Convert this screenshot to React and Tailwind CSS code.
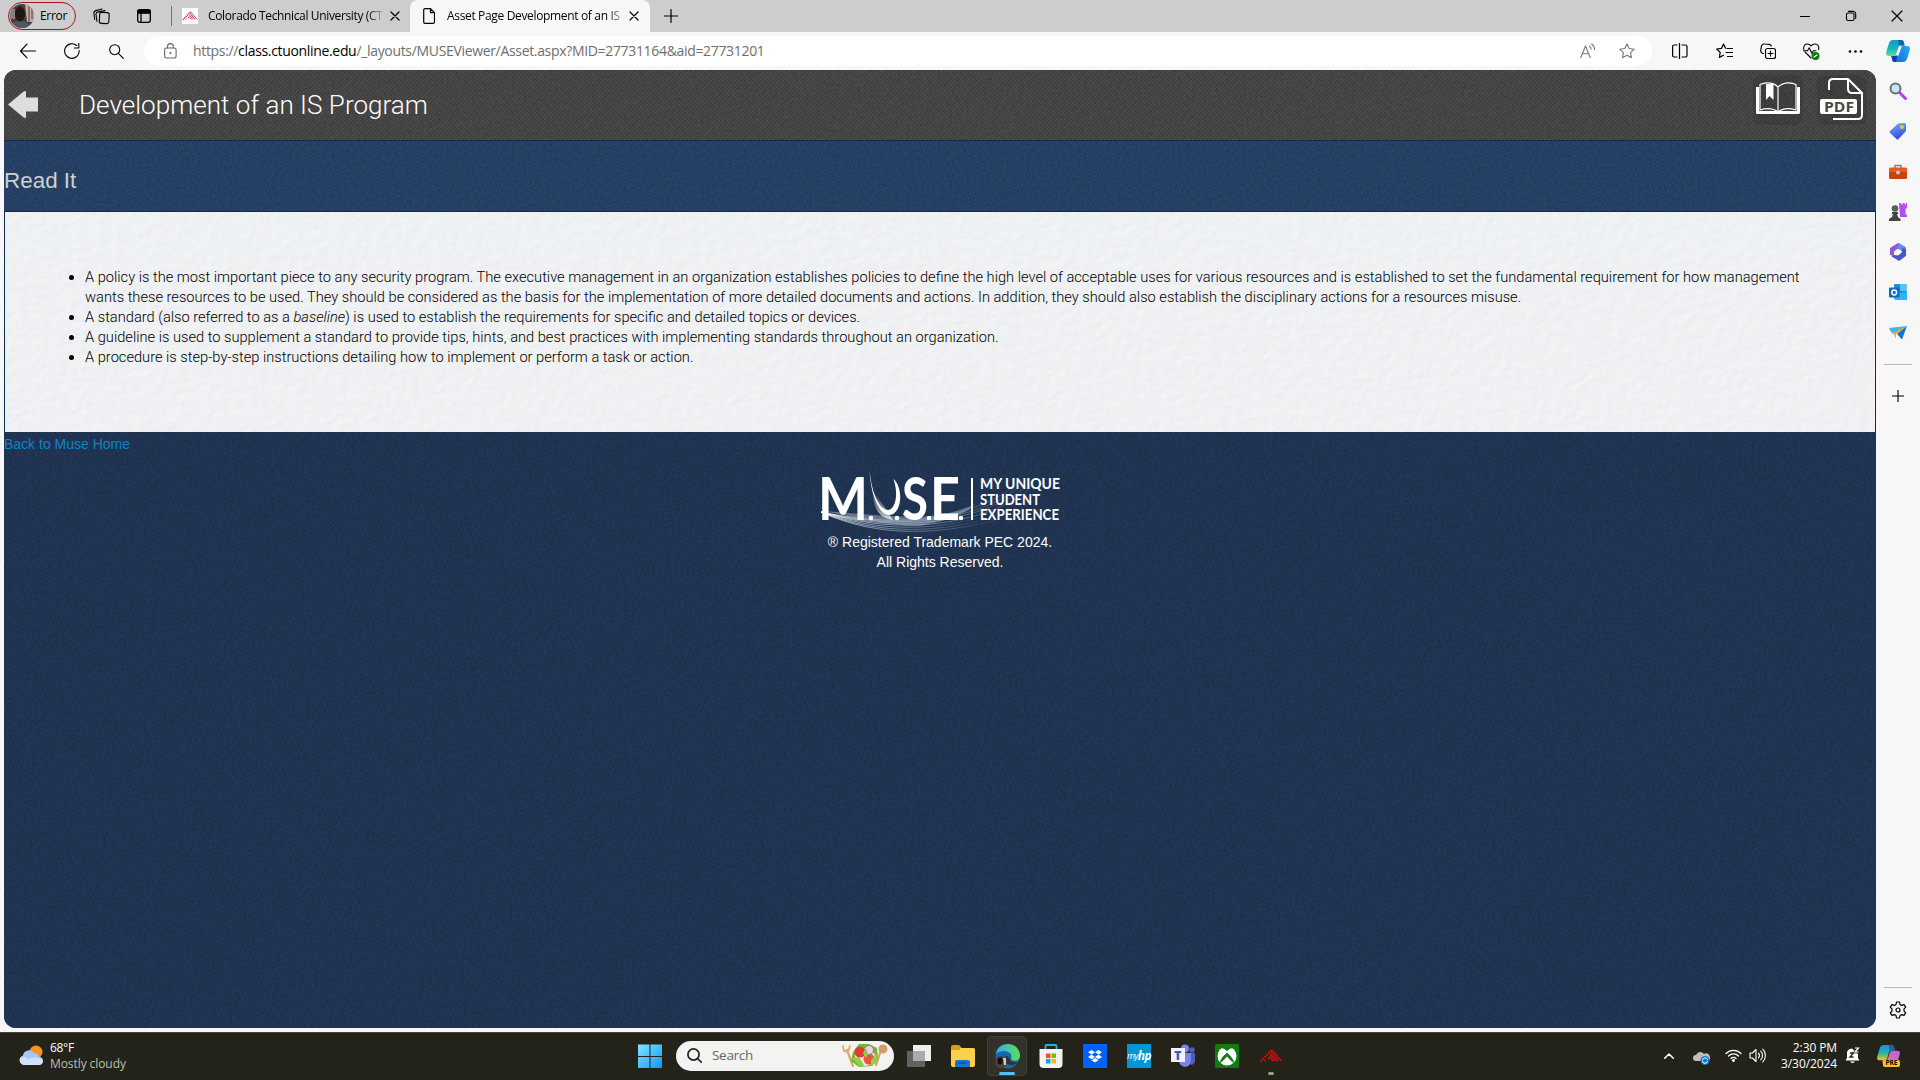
const ui = "font-['Open_Sans','Noto_Sans',sans-serif]";

function Svg({ w = 16, h = w, box, className = '', children, stroke = 'currentColor', sw = 1.1, fill = 'none' }) {
  return (
    <svg width={w} height={h} viewBox={box || `0 0 ${w} ${h}`} className={`block shrink-0 ${className}`} fill={fill} stroke={stroke} strokeWidth={sw} strokeLinecap="round" strokeLinejoin="round">
      {children}
    </svg>
  );
}

const CloseX = ({ s = 8 }) => (
  <Svg w={s} box="0 0 8 8" className="overflow-visible" sw={8 / s * 1.2}><path d="M0 0l8 8M8 0L0 8" /></Svg>
);

function CtuMark({ w, h, color }) {
  return (
    <Svg w={w} h={h} box="0 0 24 16" stroke={color} sw={1.5} className="overflow-visible">
      <path d="M0 14.500L13 1" strokeDasharray="2 1.300" strokeLinecap="butt" strokeWidth="2.600" />
      <path d="M4.500 14L6 12.500M8.500 12L10 9.500M13 1L24 14M12 3.500L20.500 14M11 6L17.500 14M10 8.500L14.500 14" strokeLinecap="butt" />
    </Svg>
  );
}

function TabBar() {
  return (
    <div className={`flex h-8 shrink-0 items-center bg-[#cdcdcd] text-[12px] text-black ${ui}`}>
      <div className="ml-2 flex h-[28px] w-[68px] items-center rounded-full border border-[#a4161c] pl-px">
        <svg width="24" height="24" viewBox="0 0 24 24" className="shrink-0 rounded-full">
          <rect width="24" height="24" fill="#4c3d3b" />
          <path d="M15 0h9v18h-7z" fill="#b9b3b4" />
          <path d="M19 0v18M22 3v12" stroke="#8a5d52" strokeWidth="1.500" />
          <path d="M0 5h5v10H0z" fill="#8c7f80" />
          <path d="M1 24c1-6 5-7 9-7s9 1 10 7z" fill="#4c5a66" />
          <ellipse cx="10" cy="10" rx="5" ry="7.500" fill="#211715" />
        </svg>
        <span className="ml-[6px] tracking-[-0.3px]">Error</span>
      </div>
      <Svg w={17} className="ml-[17px]">
        <rect x="6.500" y="4.500" width="9.500" height="11" rx="2" transform="rotate(3 11 10)" />
        <path d="M4 13.500L3 6.500C2.800 5 3.500 4.200 5 3.900L12 2.600M1.700 11.500L.9 5.500C.7 4 1.300 3 2.700 2.600L9 1" />
      </Svg>
      <Svg w={14} h={14} className="ml-[27px]" sw={1.3}>
        <rect x=".7" y=".7" width="12.600" height="12.600" rx="2" />
        <path d="M1 1.500h12v2.700H1z" fill="currentColor" />
        <path d="M4 4v9" />
      </Svg>
      <div className="ml-5 h-5 w-px bg-[#767676]" />
      <div className="ml-[10px] flex size-4 items-center justify-center bg-white"><CtuMark w={14} h={10} color="#c8283c" /></div>
      <div className="ml-[10px] w-[175px] whitespace-nowrap bg-linear-to-r from-black from-90% to-[#bbb] bg-clip-text tracking-[-0.36px] text-transparent">Colorado Technical University (CT</div>
      <div className="ml-2"><CloseX /></div>
      <div className="ml-[11px] flex h-8 w-[240px] items-center rounded-t-lg bg-[#f7f7f7]">
        <Svg w={12} h={16} className="ml-[13px]" sw={1.2}>
          <path d="M2 .7h5.500l4 4V14a1.300 1.300 0 0 1-1.300 1.300H2A1.300 1.300 0 0 1 .7 14V2A1.300 1.300 0 0 1 2 .7zM7.500 1v3.700h3.800" />
        </Svg>
        <div className="ml-3 w-[175px] whitespace-nowrap bg-linear-to-r from-black from-90% to-[#bbb] bg-clip-text tracking-[-0.34px] text-transparent">Asset Page Development of an IS</div>
        <div className="ml-2"><CloseX /></div>
      </div>
      <Svg w={14} className="ml-[14px]" sw={1.2}><path d="M7 .5v13M.5 7h13" /></Svg>
      <div className="ml-auto flex items-center pr-[18px]">
        <Svg w={10}><path d="M0 5.500h10" /></Svg>
        <Svg w={10} className="ml-9 overflow-visible"><rect x=".5" y="2" width="7.500" height="7.500" rx="1.500" /><path d="M2.500.4h4.700A2.500 2.500 0 0 1 9.700 3v4.500" /></Svg>
        <div className="ml-[36px]"><CloseX s={10} /></div>
      </div>
    </div>
  );
}

function Copilot({ w, h, pre = false }) {
  return (
    <svg width={w} height={h} viewBox="0 0 24 22" className="block shrink-0">
      <defs>
        <linearGradient id={pre ? 'ca' : 'cb'} x1="0" y1="0" x2="0" y2="1">
          <stop offset="0" stopColor={pre ? '#1b8de8' : '#1597d4'} /><stop offset=".55" stopColor={pre ? '#27b7a0' : '#1cb4b8'} /><stop offset="1" stopColor={pre ? '#f1c51b' : '#63dca0'} />
        </linearGradient>
        <linearGradient id={pre ? 'cc' : 'cd'} x1="1" y1="0" x2="0" y2="1">
          <stop offset="0" stopColor={pre ? '#b55cf0' : '#24a9f2'} /><stop offset="1" stopColor={pre ? '#ff7b62' : '#1469dd'} />
        </linearGradient>
      </defs>
      <path d="M7 0h8c2 0 2.500 1 3 3l.6 2.500h-3c-2 0-2.700 1-3.300 3l-1.500 5C10.200 15.500 9 16 7 16H3c-2.500 0-3.500-1.500-2.700-4L3 3C3.700 1 5 0 7 0z" fill={`url(#${pre ? 'ca' : 'cb'})`} />
      <path d="M12 0h3c2 0 2.500 1 3 3l.6 2.500H15l-2 .4z" fill="#1266a8" />
      <path d="M17 6h4c2.500 0 3.500 1.500 2.700 4L21 19c-.7 2-2 3-4 3H9c-2 0-2.500-1-3-3l-.6-3h3c2 0 2.700-1 3.300-3l1.500-4.500C13.800 6.500 15 6 17 6z" fill={`url(#${pre ? 'cc' : 'cd'})`} />
      <path d="M5.400 16h3c2 0 2.700-1 3.300-3L10 22H9c-2 0-2.500-1-3-3z" fill={pre ? '#ee5d76' : '#0b3fa6'} />
      {!pre && <path d="M14.500 6L11 15.500" stroke="#f7f7f7" strokeWidth="2.600" />}
    </svg>
  );
}

const star = 'M8 .9l2.200 4.600 5 .7-3.600 3.500.9 5L8 12.300l-4.500 2.400.9-5L.8 6.200l5-.7z';

function Toolbar() {
  return (
    <div className={`flex h-[38px] shrink-0 items-center bg-[#f7f7f7] ${ui}`}>
      <Svg w={16} className="ml-5 -mt-px"><path d="M.5 8h15M7 1.200L.5 8 7 14.800" /></Svg>
      <Svg w={16} className="ml-7"><path d="M15.200 7.500A7.300 7.300 0 1 1 12.700 2.500M14.800.5V5H10.300" /></Svg>
      <Svg w={15} className="ml-[29px]"><circle cx="5.700" cy="5.700" r="5" /><path d="M9.400 9.400l4.900 4.900" /></Svg>
      <div className="ml-5 flex h-[30px] w-[1508px] items-center rounded-full bg-white">
        <Svg w={13} h={16} className="ml-5 -mt-px text-[#666]"><rect x=".6" y="5" width="11.500" height="10" rx="1.700" /><path d="M3.500 5V3.500a2.900 2.900 0 0 1 5.800 0V5" /><circle cx="6.400" cy="10" r=".5" fill="currentColor" /></Svg>
        <div className="-mt-px ml-4 whitespace-nowrap text-[14px] tracking-[-0.33px] text-[#6e6e6e]">https://<span className="text-black">class.ctuonline.edu</span>/_layouts/MUSEViewer/Asset.aspx?MID=27731164&amp;aid=27731201</div>
        <Svg w={16} className="ml-auto text-[#777]"><path d="M.8 14.500L5.500 3l4.700 11.500M2.400 10.700h6.200M9.500 3.200c1.300.8 1.600 2 1.600 3M11.500 1c2 1.200 3 3 3 5.500" /></Svg>
        <Svg w={16} className="ml-[23px] mr-[17px] text-[#777]"><path d={star} /></Svg>
      </div>
      <Svg w={16} className="ml-5" sw={1.2}><path d="M7.500 0v16M5 2H2A1.500 1.500 0 0 0 .6 3.500v9A1.500 1.500 0 0 0 2 14h3M10 2h3.500A1.500 1.500 0 0 1 15 3.500v9a1.500 1.500 0 0 1-1.500 1.500H10" /></Svg>
      <Svg w={17} h={16} className="ml-7" sw={1.2}><path d="M9.500 5.200L7.500 1 5.500 5.300.7 6l3.500 3.400-.8 5 4.100-2.200M11 5.500h5.500M10 9.500h6.500M11.500 13.500h5" /></Svg>
      <Svg w={16} className="ml-[27px]" sw={1.2}><rect x="5.500" y="5.500" width="10" height="10" rx="2" /><path d="M10.500 8v5M8 10.500h5M3.500 10.500l-1-.2C1 9.500.5 8.500.7 7.500L1.500 3C2 1.300 3 .6 4.500.8l5 .5c1 .2 1.500.6 1.800 1.700" /></Svg>
      <Svg w={17} h={17} className="ml-[27px]"><path d="M.8 6.500C.2 2.500 2.200 1 4.300 1 6.300 1 7.500 2 8 3c.7-1 2-2 4-2 2.700 0 4.500 2.200 3.500 5.500M2 9l6 6M.5 7.800h4l1.700-3 2.600 5.500 1.500-2.500H13" /><circle cx="12.500" cy="13" r="3.500" fill="#107c10" stroke="#107c10" /><path d="M11 14l3-2" stroke="white" /></Svg>
      <Svg w={15} className="ml-[28px]" fill="black" stroke="none"><circle cx="2" cy="7.500" r="1.300" /><circle cx="7.500" cy="7.500" r="1.300" /><circle cx="13" cy="7.500" r="1.300" /></Svg>
      <div className="ml-[23px]"><Copilot w={24} h={22} /></div>
    </div>
  );
}

function MuseLogo() {
  return (
    <svg width="246" height="66" viewBox="0 0 246 66" className="block overflow-visible font-['Lato',sans-serif]">
      <defs>
        <linearGradient id="wave" x1="0" x2="1"><stop offset="0" stopColor="#fff" stopOpacity=".95" /><stop offset=".6" stopColor="#a9b8c9" stopOpacity=".65" /><stop offset="1" stopColor="#a9b8c9" stopOpacity=".05" /></linearGradient>
        <linearGradient id="ufade" x1="0" y1="0" x2="0" y2="1"><stop offset="0" stopColor="#fff" stopOpacity="0" /><stop offset="1" stopColor="#fff" stopOpacity=".7" /></linearGradient>
      </defs>
      <g fill="none" stroke="url(#wave)" strokeWidth=".7">
        <path d="M1 46C60 58 110 57 150 43S200 15 215 0" />
        <path d="M1 46C60 60 110 58 152 45S204 15 220 1" />
        <path d="M1 46C60 62 112 60 156 46S206 20 224 4" />
        <path d="M1 46C60 64 114 62 158 49S210 20 226 8" />
        <path d="M1 46C60 67 116 64 162 51" />
        <path d="M1 46C60 70 118 66 168 53" />
        <path d="M1 46C60 73 122 68 176 54" />
      </g>
      <path d="M1 45C35 47 65 51 100 51C125 49 140 45 155 38C145 50 120 56 100 60C60 60 25 48 1 45z" fill="#a9b8c9" opacity=".5" />
      <path d="M52 24C54 44 59 52 73 54L66 43z" fill="url(#ufade)" />
      <path d="M49.500 3C51 25 59 44 68 44C75 44 79 29 73.500 13C84 22 82 49 69 49C58 49 50 25 49.500 3z" fill="#fff" />
      <g fill="#fff" fontWeight="700">
        <text x="-2" y="54" fontSize="59" textLength="50" lengthAdjust="spacingAndGlyphs">M</text>
        <circle cx="51" cy="52" r="2.300" />
        <circle cx="77" cy="52" r="2.300" />
        <text x="82" y="54" fontSize="59" textLength="26" lengthAdjust="spacingAndGlyphs">S</text>
        <circle cx="109" cy="52" r="2.300" />
        <text x="110" y="54" fontSize="59" textLength="30" lengthAdjust="spacingAndGlyphs">E</text>
        <circle cx="141" cy="52" r="2.300" />
        <rect x="151" y="12" width="2" height="42" />
        <text x="160" y="23" fontSize="14.500" textLength="80" lengthAdjust="spacingAndGlyphs">MY UNIQUE</text>
        <text x="160" y="38.500" fontSize="14.500" textLength="60" lengthAdjust="spacingAndGlyphs">STUDENT</text>
        <text x="160" y="54" fontSize="14.500" textLength="79" lengthAdjust="spacingAndGlyphs">EXPERIENCE</text>
      </g>
    </svg>
  );
}

function Paper() {
  return (
    <svg className="pointer-events-none absolute inset-0 h-full w-full opacity-20">
      <filter id="paper" x="0" y="0" width="100%" height="100%" colorInterpolationFilters="sRGB">
        <feTurbulence type="fractalNoise" baseFrequency=".1 .13" numOctaves="3" seed="4" />
        <feDiffuseLighting surfaceScale=".55" diffuseConstant="1.080" lightingColor="#f8fbff"><feDistantLight azimuth="225" elevation="60" /></feDiffuseLighting>
      </filter>
      <rect width="100%" height="100%" filter="url(#paper)" />
    </svg>
  );
}

/* Fine dark mottling laid over a striped background, beneath the content. */
function Grain({ id }) {
  return (
    <svg className="pointer-events-none absolute inset-0 -z-10 h-full w-full">
      <filter id={id} x="0" y="0" width="100%" height="100%" colorInterpolationFilters="sRGB">
        <feTurbulence type="fractalNoise" baseFrequency=".35" numOctaves="2" seed="9" />
        <feColorMatrix values="0 0 0 0 0  0 0 0 0 0  0 0 0 0 0  .7 0 0 0 -.25" />
      </filter>
      <rect width="100%" height="100%" filter={`url(#${id})`} opacity=".4" />
    </svg>
  );
}

function Page() {
  return (
    <main className="flex h-[958px] w-[1872px] flex-col overflow-hidden rounded-xl bg-[#1f3450] font-['Liberation_Sans',sans-serif]">
      <header className="relative isolate flex h-[70px] shrink-0 items-start bg-[repeating-linear-gradient(135deg,#424242_0px,#4e4e4e_1.414px,#424242_2.8284px)]">
        <Grain id="grain-head" />
        <Svg w={30} h={27} className="ml-1 mt-[21px]" fill="#ddd" stroke="none"><path d="M0 13.500L15 1q3-2 3 0v5.500h12v14H18V26q0 2-3 0z" /></Svg>
        <h1 className="ml-[41px] mt-[15px] whitespace-nowrap font-['Roboto',sans-serif] text-[26px] font-light leading-10 tracking-[0.03px] text-white">Development of an IS Program</h1>
        <div className="ml-auto mt-[5px] flex size-[50px] items-center justify-center rounded-lg bg-black/10">
          <Svg w={44} h={32} stroke="#fff" sw={1.2} className="mb-[4px]">
            <path d="M1.500 5v25.500h41V5" strokeWidth="3" strokeLinecap="butt" />
            <path d="M22 5C17 0 9 0 4 2.500V28c6-2 13-2 18 2 5-4 12-4 18-2V2.500C35 0 27 0 22 5zM22 5v25" />
            <path d="M10 2h7.500v16l-4-4L10 18z" fill="#fff" stroke="none" />
          </Svg>
        </div>
        <div className="ml-[14px] mr-[9px] mt-[5px] flex size-[50px] items-center justify-center rounded-lg bg-black/10">
          <svg width="46" height="44" viewBox="0 0 46 44" className="mb-[3px] block" fill="none">
            <path d="M10 13V6q0-4 4-4h15l14 14v22q0 4-4 4H14M29 2v10q0 4 4 4h10" stroke="#fff" strokeWidth="2" />
            <rect x="1" y="22" width="37" height="15" rx="2" fill="#fff" />
            <text x="5" y="34.500" fontSize="14" fontWeight="700" fill="#484848" textLength="30" lengthAdjust="spacingAndGlyphs" className="font-['Open_Sans',sans-serif]">PDF</text>
          </svg>
        </div>
      </header>
      <section className="relative isolate flex h-[72px] shrink-0 items-center border-y border-[#172a45] bg-[repeating-linear-gradient(135deg,#243e62_0px,#2a476d_1.414px,#243e62_2.8284px)]">
        <Grain id="grain-title" />
        <h2 className="mt-[9px] text-[22.400px] leading-8 tracking-[0.02px] text-[#cfcfcf]">Read It</h2>
      </section>
      <section className="relative h-[220px] shrink-0 border-x border-[#172a45] bg-[#f1f3f5] pt-[55px]">
        <Paper />
        <ul className="relative list-disc pl-20 font-['Roboto',sans-serif] text-[14.655px] font-light leading-5 text-black">
          <li className="whitespace-nowrap">A policy is the most important piece to any security program. The executive management in an organization establishes policies to define the high level of acceptable uses for various resources and is established to set the fundamental requirement for how management<br />wants these resources to be used. They should be considered as the basis for the implementation of more detailed documents and actions. In addition, they should also establish the disciplinary actions for a resources misuse.</li>
          <li>A standard (also referred to as a <em>baseline</em>) is used to establish the requirements for specific and detailed topics or devices.</li>
          <li>A guideline is used to supplement a standard to provide tips, hints, and best practices with implementing standards throughout an organization.</li>
          <li>A procedure is step-by-step instructions detailing how to implement or perform a task or action.</li>
        </ul>
      </section>
      <footer className="relative isolate flex-1 bg-[repeating-linear-gradient(135deg,#1f3451_0px,#23395a_1.414px,#1f3451_2.8284px)] pt-[2px] text-[14px] leading-5 text-white">
        <Grain id="grain-foot" />
        <a className="block text-[#0f82c8]">Back to Muse Home</a>
        <div className="mt-[12px] flex flex-col items-center">
          <div className="pl-[6px]"><MuseLogo /></div>
          <p className="text-center">® Registered Trademark PEC 2024.<br />All Rights Reserved.</p>
        </div>
      </footer>
    </main>
  );
}

function Sidebar() {
  return (
    <aside className="flex h-[962px] w-11 shrink-0 flex-col items-center pr-px pt-[12px]">
      <div className="flex flex-col items-center gap-[22.300px]">
        <Svg w={18}><path d="M11 11l5.500 5.500" stroke="#b43ff0" strokeWidth="3" /><circle cx="6.500" cy="6.500" r="5" fill="#c4e6fb" stroke="#6b7078" strokeWidth="2" /></Svg>
        <Svg w={18} stroke="none"><defs><linearGradient id="tg" x1="0" y1="0" x2=".3" y2="1"><stop stopColor="#6db6ff" /><stop offset="1" stopColor="#3b49e0" /></linearGradient></defs><path d="M9 1.500L15.500 1q1.500 0 1.500 1.500V9L9.500 17q-1 1-2 0L1 11q-1-1 0-2z" fill="url(#tg)" /><circle cx="13" cy="5" r="2" fill="#fbc02d" /></Svg>
        <Svg w={18} stroke="none"><path d="M6 5V2.500h6V5" stroke="#7d8186" strokeWidth="1.500" /><rect y="5" width="18" height="11" rx="1.500" fill="#c9410f" /><path d="M0 6q0-1.500 1.500-1.500h15Q18 4.500 18 6v3H0z" fill="#ea5a1e" /><circle cx="9" cy="9.500" r="2" fill="#ccc" /></Svg>
        <Svg w={18} stroke="none"><path d="M10 0h2v1.500h1.700V0h2v1.500H17V0h1v5l-1.500 1v5l1.500 1v2h-7z" fill="#b34df5" /><circle cx="6" cy="5.500" r="3.300" fill="#5c5c5c" /><path d="M3 9h6v2H8l1 3 2.500 2v2H0v-2l3-2 1-3H3z" fill="#444" /></Svg>
        <Svg w={18} stroke="none"><path d="M9 0l7 4-3.500 4L9 6 5 8.500V13L1 12V5z" fill="#8b5bd6" /><path d="M10 0l7 4.500v8L13 12V8L8 5z" fill="#5b8ff0" /><path d="M17 13l-7 5-8-5 3-1 4 .5 4-3.500V5l4 1z" fill="#4f54c8" /><circle cx="9" cy="9" r="2.800" fill="#f7f7f7" /></Svg>
        <Svg w={18} stroke="none"><rect x="5" y="1" width="12.500" height="15" rx="1" fill="#1b90e0" /><path d="M11 1h6.500v7H11z" fill="#50c8f0" /><path d="M5 11l13-2v7q0 1-1 1H6z" fill="#2cb7f0" /><rect y="4.500" width="10.500" height="10" rx="1" fill="#0b6cbf" /><circle cx="5.200" cy="9.500" r="2.400" stroke="white" strokeWidth="1.500" /></Svg>
        <Svg w={18} stroke="none"><path d="M0 4l18-2-9 7-6 .5z" fill="#41b3f3" /><path d="M18 2l-5 13.500L8 10z" fill="#1673d1" /><path d="M3 9l15-7-11 8-.5 5L5 10z" fill="#f6a623" /></Svg>
      </div>
      <div className="mt-[22px] h-px w-7 bg-[#bbb]" />
      <Svg w={12} className="mt-[25px]"><path d="M6 0v12M0 6h12" /></Svg>
      <div className="mt-auto h-px w-7 bg-[#bbb]" />
      <Svg w={18} className="mb-[13px] mt-[13px]" box="0 0 18 18" sw={1.2}>
        <circle cx="9" cy="9" r="2" />
        <path d="M7.500 1h3l.5 2.500 1.600.9L15 3.600l1.700 2.600L15 8v2l1.700 1.800L15 14.400l-2.400-.8-1.600.9-.5 2.500h-3L7 14.500l-1.600-.9-2.400.8-1.700-2.600L3 10V8L1.300 6.200 3 3.600l2.400.8L7 3.500z" />
      </Svg>
    </aside>
  );
}

const Cell = ({ children }) => <div className="flex h-12 w-11 shrink-0 items-center justify-center">{children}</div>;

function Taskbar() {
  return (
    <div className={`flex h-12 shrink-0 items-center border-t border-[#45443c] bg-[#24231a] pb-[2px] text-white ${ui}`}>
      <div className="flex w-[628px] items-center text-[12px] leading-4">
        <Svg w={24} h={22} className="ml-[19px]" stroke="none"><circle cx="17" cy="7" r="6.500" fill="#f59423" /><path d="M5 20a5 5 0 0 1-1-9.500A6 6 0 0 1 15 8a5.500 5.500 0 0 1 5 4 4 4 0 0 1 0 8z" fill="#a9c8f8" /><path d="M5 20a5 5 0 0 1-4-7q4-3 8 1 6-3 14 0a4 4 0 0 1-3 6z" fill="#d2e2fb" /></Svg>
        <div className="ml-[7px]"><div className="tracking-[-0.3px]">68°F</div><div className="tracking-[-0.08px] text-[#bdbdb8]">Mostly cloudy</div></div>
      </div>
      <Cell>
        <svg width="24" height="24" viewBox="0 0 24 24"><defs><linearGradient id="win" x1="0" y1="0" x2="1" y2="1"><stop stopColor="#7fe8ff" /><stop offset="1" stopColor="#1495f5" /></linearGradient></defs><path d="M0 .5h11.500V12H0zM12.500.5H24V12H12.500zM0 13h11.500v11H0zM12.500 13H24v11H12.500z" fill="url(#win)" /></svg>
      </Cell>
      <div className="ml-1 mr-[3px] flex h-[30px] w-[218px] items-center rounded-full bg-[#f3f3f1]">
        <Svg w={15} className="ml-[11px]" stroke="#222" sw={1.7}><circle cx="6.500" cy="6.500" r="5.600" /><path d="M10.500 10.500l3.700 3.700" /></Svg>
        <span className="ml-[10px] text-[13.500px] tracking-[-0.3px] text-[#666]">Search</span>
        <svg width="48" height="25" viewBox="0 0 48 25" className="ml-auto mr-[5px]">
          <path d="M6 7l6 16M40 7l-5 15" stroke="#d9a36b" strokeWidth="2.200" strokeLinecap="round" />
          <path d="M2 3l1 5 4 1 2-6" fill="none" stroke="#e0ad79" strokeWidth="2" strokeLinecap="round" /><circle cx="42" cy="6" r="4.500" fill="#d79b66" />
          <path d="M12 9L18 1l10 0 8 4 1 12-6 6-13 1-8-6z" fill="#73b834" />
          <ellipse cx="24" cy="14" rx="10" ry="9" fill="#f3e6dc" />
          <circle cx="19" cy="9" r="5.500" fill="#df3d2d" /><circle cx="28" cy="16" r="5.500" fill="#e9523c" /><circle cx="28" cy="7" r="4.500" fill="#e9d6e4" stroke="#a96aaa" />
          <path d="M11 15l7-1 5 8-4 2zM22 10l3-5 2 6-2 4zM30 17l7-7-1 9-6 4z" fill="#90cf47" />
        </svg>
      </div>
      <Cell><svg width="24" height="22" viewBox="0 0 24 22"><path d="M0 6h18v16H0z" fill="#626262" /><path d="M6 0h18v16H6z" fill="#eee" /><path d="M6 6h12v10H6z" fill="#aaa" /></svg></Cell>
      <Cell><svg width="24" height="22" viewBox="0 0 24 22"><path d="M0 2q0-2 2-2h6l3 3h11q2 0 2 2v4H0z" fill="#dc9a0c" /><path d="M0 6q0-1 1-1h7l2-2h12q2 0 2 2v15q0 2-2 2H2q-2 0-2-2z" fill="#fdd04b" /><path d="M4 22v-5q0-2 2-2h11q2 0 2 2v5z" fill="#1678cc" /><path d="M7 18h9" stroke="#0b5698" strokeWidth="1.500" /></svg></Cell>
      <div className="flex h-12 w-11 items-center justify-center">
        <div className="flex h-10 w-10 flex-col items-center rounded border border-[#403f38] bg-[#33322a] pt-[7px]">
          <svg width="25" height="25" viewBox="0 0 25 25" className="shrink-0"><defs><linearGradient id="ed" x1="0" x2="1"><stop stopColor="#32aee9" /><stop offset="1" stopColor="#61dc55" /></linearGradient></defs><circle cx="12.500" cy="12.500" r="12" fill="#1468b1" /><path d="M1 10C3-4 25-3 25 12c0 6-9 6-9 2 3-6-9-10-15-4z" fill="url(#ed)" /><path d="M11 12c-3 7 3 12 12 7l-3-1q-6 0-6-5z" fill="#33322a" /><circle cx="6" cy="18" r="6" fill="#4c3f3e" /><ellipse cx="5" cy="17" rx="2.500" ry="3.500" fill="#160f0f" /><path d="M8 14h3v7H9z" fill="#ccc" /></svg>
          <div className="mt-[3px] h-[3px] w-4 shrink-0 rounded-full bg-[#58bcf5]" />
        </div>
      </div>
      <Cell><svg width="24" height="24" viewBox="0 0 24 24"><path d="M6.500 7V2q0-1 1-1h9q1 0 1 1v5" fill="none" stroke="#24b1e8" strokeWidth="1.800" /><path d="M.5 5h23v15q0 4-4 4h-15q-4 0-4-4z" fill="#f2f2f2" /><path d="M7 9.500h4.500V14H7z" fill="#f25022" /><path d="M12.500 9.500H17V14h-4.500z" fill="#7fba00" /><path d="M7 15h4.500v4.500H7z" fill="#00a4ef" /><path d="M12.500 15H17v4.500h-4.500z" fill="#ffb900" /></svg></Cell>
      <Cell><svg width="24" height="24" viewBox="0 0 24 24"><path d="M0 0h24v24H0z" fill="#0061fe" /><path d="M8.500 6l3.500 2.300-3.500 2.300L5 8.300zM15.500 6L19 8.300l-3.500 2.300L12 8.300zM8.500 10.600l3.500 2.300-3.500 2.300L5 12.900zM15.500 10.600l3.500 2.300-3.500 2.300-3.500-2.300zM12 14l3.500 2.200-3.500 2.300-3.500-2.300z" fill="#fff" /></svg></Cell>
      <Cell><div className="flex size-6 items-center justify-center bg-[#0096d6] text-[9px] italic tracking-[-0.6px]">my<span className="text-[12px] font-bold">hp</span></div></Cell>
      <Cell><svg width="25" height="24" viewBox="0 0 25 24"><circle cx="14" cy="4.500" r="4" fill="#7b83eb" /><circle cx="21" cy="6" r="2.800" fill="#5059c9" /><path d="M17 9h7v8q0 3-4 4z" fill="#5059c9" /><path d="M8 9h12v8q0 5-6 6-5-1-6-5z" fill="#7b83eb" /><path d="M0 4h14v14H0z" fill="#f2f2ff" /><text x="3.200" y="15.500" fontSize="12" fontWeight="800" fill="#4b53bc" className="font-['Open_Sans',sans-serif]">T</text></svg></Cell>
      <Cell><svg width="24" height="24" viewBox="0 0 24 24"><rect width="24" height="24" rx="1.500" fill="#107c10" /><circle cx="12" cy="12" r="9.500" fill="#fff" /><path d="M6 4q3 0 6 3 3-3 6-3-3-2-6-2T6 4zM12 8.500C7 13 4.500 17 5.200 19q1 0 6.800-6.500Q17.800 19 18.800 19c.7-2-1.800-6-6.800-10.500z" fill="#107c10" /></svg></Cell>
      <Cell><div className="flex flex-col items-center pt-[13px]"><CtuMark w={22} h={14} color="#d50d12" /><div className="mt-[9px] h-[3px] w-[6px] rounded-full bg-[#9a9a94]" /></div></Cell>
      <div className="ml-auto flex items-center">
        <Svg w={10} h={6} stroke="#fff" sw={1.5}><path d="M.7 5.300L5 1l4.300 4.300" /></Svg>
        <Svg w={17} h={14} className="ml-[19px] mt-1" stroke="none"><path d="M3 10a3 3 0 0 1 0-6 4.500 4.500 0 0 1 8-1 4 4 0 0 1 4 7z" fill="#bdbdbd" /><circle cx="12" cy="9.500" r="4.500" fill="#1477d4" /><path d="M9.500 9a2.600 2.600 0 0 1 5-.5M14.500 10.500a2.600 2.600 0 0 1-5 0" stroke="#fff" strokeWidth="1" /></Svg>
        <Svg w={17} h={13} className="ml-[15px]" stroke="#fff" sw={1.3}><path d="M1 4.500a10.500 10.500 0 0 1 15 0M3.500 7a7 7 0 0 1 10 0M6 9.500a3.500 3.500 0 0 1 5 0" /><circle cx="8.500" cy="11.500" r=".8" fill="#fff" /></Svg>
        <Svg w={17} h={15} className="ml-[7px]" stroke="#fff" sw={1.1}><path d="M1 5h2.500L7 1.500v12L3.500 10H1zM9.500 5.200a3.500 3.500 0 0 1 0 4.600M11.700 3.200a6 6 0 0 1 0 8.600M13.800 1.200a9 9 0 0 1 0 12.600" /></Svg>
        <div className="w-[71px] text-right text-[12px] leading-4"><div className="tracking-[-0.1px]">2:30 PM</div><div className="tracking-[-0.1px]">3/30/2024</div></div>
        <svg width="15" height="17" viewBox="0 0 15 17" className="ml-2" fill="#fff"><path d="M2 11V6q0-4 5-4.500L13 7v4l1.500 2.500H.5zM5 14.500h5q-2.500 3-5 0z" /><path d="M5 6h3.500L5 10h3.500" fill="none" stroke="#24231a" strokeWidth="1.300" /><path d="M10 1h3.500L10 5h3.500" fill="none" stroke="#24231a" strokeWidth="2.400" /><path d="M10 1h3.500L10 5h3.500" fill="none" stroke="#fff" strokeWidth="1.200" /></svg>
        <div className="relative ml-[17px] mr-[20px]"><Copilot w={23} h={21} pre /><div className="absolute left-[6px] top-[15px] flex h-[7px] w-[17px] items-center justify-center rounded-xs bg-[#fdc70c] text-[6.500px] font-bold leading-none text-black">PRE</div></div>
      </div>
    </div>
  );
}

export default function App() {
  return (
    <div className="flex h-[1080px] w-[1920px] flex-col overflow-hidden bg-[#f7f7f7] text-black">
      <TabBar />
      <Toolbar />
      <div className="flex h-[962px] shrink-0 pl-1">
        <Page />
        <Sidebar />
      </div>
      <Taskbar />
    </div>
  );
}
